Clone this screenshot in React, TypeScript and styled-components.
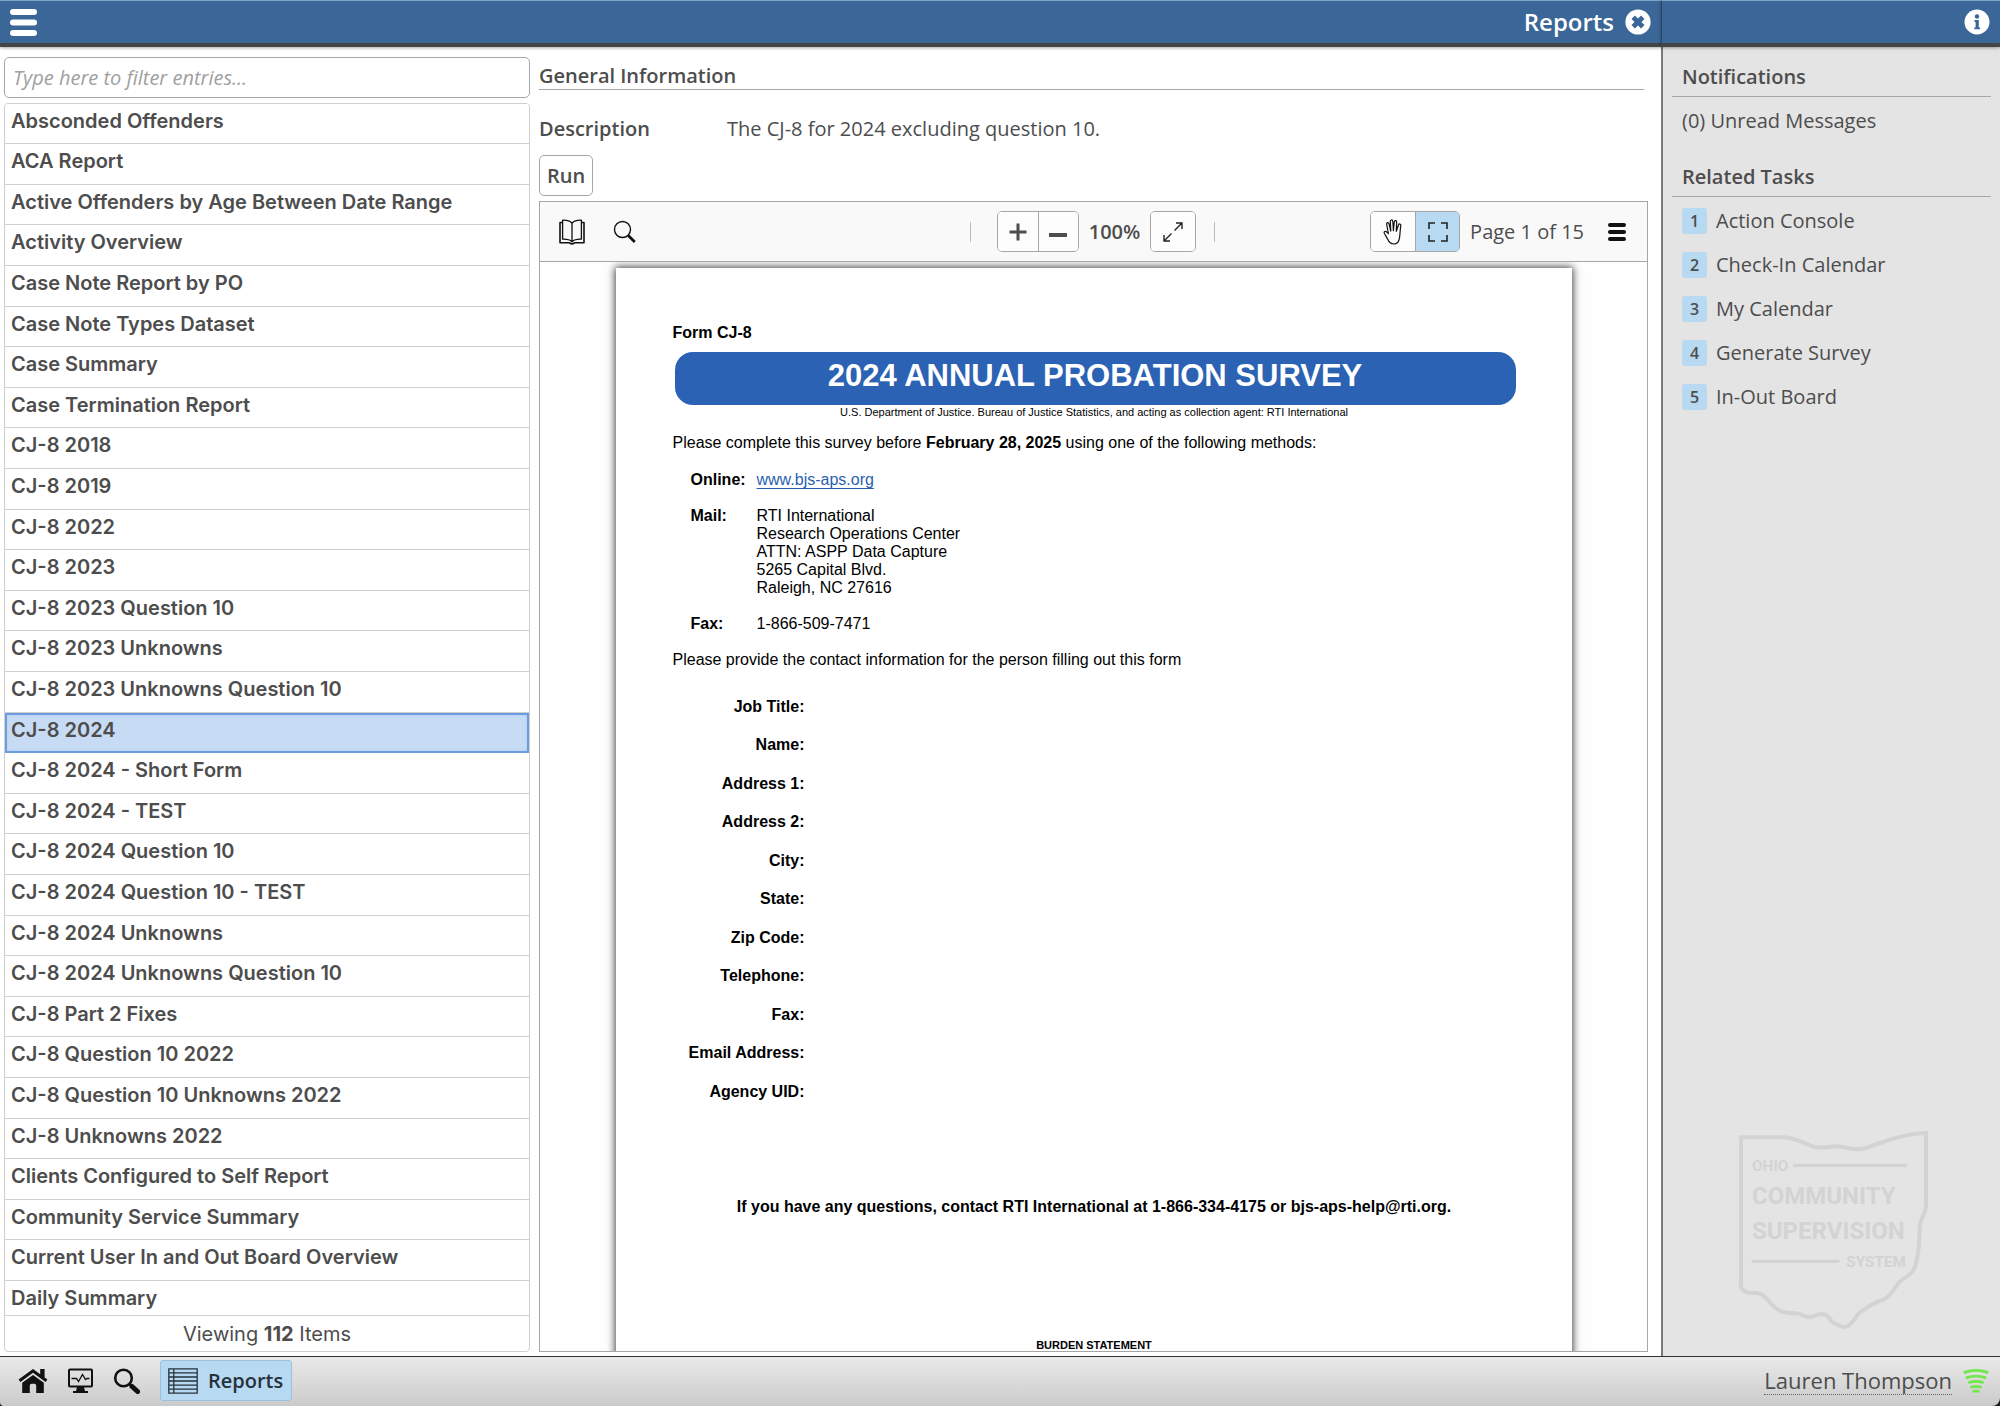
import React, { useState } from "react";
import styled, { createGlobalStyle, css } from "styled-components";

const openSans = '"Open Sans", "Noto Sans", sans-serif';
const inter = 'Inter, "Liberation Sans", sans-serif';
const arial = '"Liberation Sans", Arial, sans-serif';

const ink = "#4d4d4d";
const line = "#a6a6a6";
const softLine = "#cfcfcf";
const highlight = "#b7d9f1";

const GlobalStyle = createGlobalStyle`
  *, *::before, *::after { box-sizing: border-box; }
  body { margin: 0; background: #1c1c1c; color: ${ink}; font: 400 20px/28px ${openSans}; }
  button { font: inherit; color: inherit; cursor: pointer; }
  h1, h2, p, ul, ol, dl, dd { margin: 0; padding: 0; }
  ul, ol { list-style: none; }
  svg { display: block; }
`;

const Shell = styled.div`
  display: grid;
  grid-template-columns: minmax(0, 1fr) 339px;
  grid-template-rows: 47px minmax(0, 1fr) 50px;
  height: 100vh;
  overflow: hidden;
`;

const TopBar = styled.header<{ $divided?: boolean }>`
  display: flex;
  align-items: center;
  justify-content: space-between;
  padding: 0 10px;
  background: #3b6798;
  color: #fff;
  border-top: 1px solid #7ea3c8;
  border-bottom: 4px solid #434547;
  border-left: ${(p) => (p.$divided ? "1px solid #2c4763" : "0")};
  box-shadow: 0 1px 3px rgba(0, 0, 0, 0.35);
  z-index: 1;
`;

const TopTitle = styled.h1`
  display: flex;
  align-items: center;
  gap: 11px;
  margin-left: auto;
  font: 600 24px/32px ${openSans};
`;

const IconButton = styled.button`
  display: flex;
  padding: 0;
  border: 0;
  background: none;
`;

const Workspace = styled.main`
  display: grid;
  grid-template-columns: 526px minmax(0, 1fr);
  column-gap: 9px;
  padding: 10px 13px 4px 4px;
  background: #fff;
`;

const ReportPane = styled.section`
  display: flex;
  flex-direction: column;
  gap: 5px;
  min-height: 0;
`;

const FilterInput = styled.input`
  height: 41px;
  padding: 0 8px;
  border: 1px solid ${line};
  border-radius: 5px;
  background: #fff;
  color: ${ink};
  font: 400 20px/28px ${openSans};
  &::placeholder { color: #a0a0a0; font-style: italic; opacity: 1; }
`;

const ReportBox = styled.div`
  display: flex;
  flex-direction: column;
  flex: 1;
  min-height: 0;
  border: 1px solid ${softLine};
  border-radius: 4px;
  overflow: hidden;
  font-optical-sizing: none;
`;

const ReportList = styled.ul`
  flex: 1;
  min-height: 0;
  overflow: hidden;
`;

const ReportItem = styled.li`
  height: 41px;
  &:nth-child(5n + 1), &:nth-child(5n + 3) { height: 40px; }
`;

const ReportButton = styled.button<{ $selected: boolean }>`
  display: block;
  width: 100%;
  height: 100%;
  padding: 0 6px 6px;
  border: 0;
  border-bottom: 1px solid ${softLine};
  background: #fff;
  text-align: left;
  font: 600 20px/24px ${inter};
  font-optical-sizing: none;
  ${(p) =>
    p.$selected &&
    css`
      background: #c8dbf4;
      border-bottom: 0;
      box-shadow: inset 0 0 0 2px #6b9ddf, inset 0 0 3px 2px #a9cbf3;
    `}
`;

const ListCount = styled.p`
  height: 36px;
  border-top: 1px solid ${softLine};
  text-align: center;
  font: 400 20px/36px ${inter};
`;

const DetailPane = styled.section`
  display: flex;
  flex-direction: column;
  min-height: 0;
`;

const DetailHeading = styled.h2`
  height: 33px;
  margin-right: 4px;
  padding-top: 5px;
  border-bottom: 1px solid ${line};
  font: 600 20px/28px ${openSans};
`;

const DescriptionRow = styled.dl`
  display: grid;
  grid-template-columns: 188px minmax(0, 1fr);
  padding: 25px 0 12px;
  dt { font-weight: 600; }
`;

const RunButton = styled.button`
  align-self: flex-start;
  height: 41px;
  margin-bottom: 5px;
  padding: 0 7px;
  border: 1px solid ${line};
  border-radius: 5px;
  background: #fff;
  font-weight: 600;
`;

const Viewer = styled.div`
  display: flex;
  flex-direction: column;
  flex: 1;
  min-height: 0;
  border: 1px solid ${line};
`;

const ViewerToolbar = styled.div`
  display: grid;
  grid-template-columns: 1fr auto 1fr;
  align-items: center;
  flex: none;
  height: 60px;
  padding: 0 21px 0 19px;
  background: #f9f9f9;
  border-bottom: 1px solid ${line};
`;

const ToolGroup = styled.div<{ $gap: number; $end?: boolean }>`
  display: flex;
  align-items: center;
  gap: ${(p) => p.$gap}px;
  justify-content: ${(p) => (p.$end ? "flex-end" : "flex-start")};
`;

const ToolDivider = styled.span`
  width: 1px;
  height: 20px;
  background: #bdbdbd;
`;

const ToolButtons = styled.div`
  display: flex;
  border: 1px solid ${line};
  border-radius: 5px;
  overflow: hidden;
`;

const ToolButton = styled.button<{ $wide?: boolean; $active?: boolean }>`
  display: flex;
  align-items: center;
  justify-content: center;
  width: ${(p) => (p.$wide ? 44 : 40)}px;
  height: 39px;
  padding: 0;
  border: 0;
  background: ${(p) => (p.$active ? highlight : "#fdfdfd")};
  & + & { border-left: 1px solid ${line}; }
`;

const ZoomControls = styled.div`
  display: flex;
  align-items: center;
  gap: 10px;
  margin: 0 8px 0 16px;
`;

const ZoomLevel = styled.span`
  font-weight: 600;
`;

const MenuButton = styled(IconButton)`
  margin-left: 14px;
  color: #111;
`;

const PageArea = styled.div`
  display: flex;
  justify-content: center;
  flex: 1;
  min-height: 0;
  padding-top: 6px;
  background: #fefefe;
  overflow: hidden;
`;

const Sheet = styled.article`
  flex: 0 0 956px;
  height: 1237px;
  padding: 56px 56px 0 57px;
  background: #fff;
  color: #000;
  box-shadow: 0 0 8px 1px rgba(0, 0, 0, 0.75);
  font: 400 16px/18px ${arial};
`;

const Banner = styled.h2`
  height: 53px;
  margin: 10px 0 0 2px;
  border-radius: 18px;
  background: #2b62b3;
  color: #fff;
  text-align: center;
  font: 700 31px/48px ${arial};
`;

const SmallPrint = styled.p<{ $bold?: boolean; $top?: number }>`
  margin-top: ${(p) => p.$top ?? 0}px;
  text-align: center;
  font: ${(p) => (p.$bold ? 700 : 400)} 11px/14px ${arial};
`;

const Paragraph = styled.p<{ $top: number; $center?: boolean }>`
  margin-top: ${(p) => p.$top}px;
  text-align: ${(p) => (p.$center ? "center" : "left")};
`;

const Contacts = styled.dl`
  display: grid;
  grid-template-columns: 66px minmax(0, 1fr);
  row-gap: 18px;
  padding: 19px 0 0 18px;
  dt { font-weight: 700; }
  a { color: #2b5fb0; text-underline-offset: 3px; text-decoration-thickness: 1px; }
`;

const FieldList = styled.ul`
  width: 132px;
  margin-top: 19px;
`;

const Field = styled.li`
  height: 38px;
  text-align: right;
  white-space: nowrap;
  font: 700 16px/38px ${arial};
  &:nth-child(even) { height: 39px; }
`;

const SidePanel = styled.aside`
  display: flex;
  flex-direction: column;
  padding: 14px 9px 27px 9px;
  background: #e4e4e4;
  border-left: 2px solid #7a7a7a;
`;

const SideHeading = styled.h2`
  height: 36px;
  padding: 2px 10px 0;
  border-bottom: 1px solid ${line};
  font: 600 20px/28px ${openSans};
`;

const SideMessages = styled.a`
  padding: 10px 10px 26px;
  color: inherit;
  text-decoration: none;
`;

const TaskList = styled.ol`
  padding: 2px 10px;
`;

const TaskLink = styled.a`
  display: flex;
  align-items: center;
  gap: 9px;
  height: 44px;
  color: inherit;
  text-decoration: none;
`;

const TaskNumber = styled.span`
  width: 25px;
  height: 26px;
  border-radius: 3px;
  background: ${highlight};
  text-align: center;
  font: 600 16px/26px ${openSans};
`;

const LogoSlot = styled.div`
  margin: auto 63px 0 auto;
`;

const TaskBar = styled.footer`
  grid-column: 1 / -1;
  display: flex;
  align-items: center;
  gap: 20px;
  padding: 0 11px 2px 18px;
  border-top: 1px solid #333;
  border-radius: 0 0 8px 4px;
  background: linear-gradient(#e9e9e9, #cbcbcb);
`;

const OpenTab = styled.button`
  display: flex;
  align-items: center;
  gap: 10px;
  height: 41px;
  padding: 0 8px 0 7px;
  border: 1px solid #9cc1dd;
  border-radius: 3px;
  background: ${highlight};
  color: #26323b;
  font-weight: 600;
`;

const Account = styled.div`
  display: flex;
  align-items: center;
  gap: 11px;
  margin-left: auto;
`;

const UserLink = styled.a`
  border-bottom: 1px dotted #666;
  color: inherit;
  text-decoration: none;
  font: 400 22px/28px ${openSans};
`;

const BarsIcon = ({ size, thick }: { size: number; thick: number }) => (
  <svg width={size} height={size} viewBox={`0 0 ${size} ${size}`} fill="currentColor" aria-hidden="true">
    {[0, (size - thick) / 2, size - thick].map((y) => (
      <rect key={y} y={y} width={size} height={thick} rx={thick / 2} />
    ))}
  </svg>
);

const CloseIcon = () => (
  <svg width="26" height="26" viewBox="0 0 26 26" aria-hidden="true">
    <circle cx="13" cy="13" r="12.6" fill="#fff" />
    <path d="M8.200 8.200l9.600 9.600M17.800 8.200l-9.600 9.600" stroke="#3b6798" strokeWidth="4.800" />
  </svg>
);

const InfoIcon = () => (
  <svg width="26" height="26" viewBox="0 0 26 26" aria-hidden="true">
    <circle cx="13" cy="13" r="12.5" fill="#fff" />
    <circle cx="13" cy="7.5" r="2.2" fill="#3b6798" />
    <path d="M10.5 11h4.300v7.500h1.200v1.800h-5.700v-1.800h1.300v-5.600h-1.100z" fill="#3b6798" />
  </svg>
);

const BookIcon = () => (
  <svg width="26" height="26" viewBox="0 0 26 26" fill="none" stroke="#111" strokeWidth="1.3" strokeLinejoin="round" aria-hidden="true">
    <path d="M13 4.2C11 2 7.5 1 3.6 1.2v19c4-.2 7.4.6 9.4 2.6 2-2 5.4-2.8 9.4-2.6v-19C18.5 1 15 2 13 4.2zM13 4.2v18.6" />
    <path d="M3.6 3.500H1v20.200h9.400c.8 1.600 4.400 1.600 5.200 0H25V3.500h-2.600" strokeWidth="1.6" />
  </svg>
);

const FindIcon = () => (
  <svg width="24" height="24" viewBox="0 0 24 24" fill="none" stroke="#111" aria-hidden="true">
    <circle cx="9.5" cy="9.5" r="8" strokeWidth="1.4" />
    <path d="M15.200 15.400l6.600 6.600" strokeWidth="2.8" />
  </svg>
);

const PlusIcon = () => (
  <svg width="18" height="18" viewBox="0 0 18 18" stroke={ink} strokeWidth="3" aria-hidden="true">
    <path d="M9 .5v17M.5 9h17" />
  </svg>
);

const MinusIcon = () => (
  <svg width="18" height="18" viewBox="0 0 18 18" stroke={ink} strokeWidth="4" aria-hidden="true">
    <path d="M0 12h18" />
  </svg>
);

const ExpandIcon = () => (
  <svg width="20" height="20" viewBox="0 0 20 20" fill="none" stroke="#222" strokeWidth="1.4" aria-hidden="true">
    <path d="M13 1h6v6M19 1l-7.500 7.500M7 19H1v-6M1 19l7.500-7.500" />
  </svg>
);

const HandIcon = () => (
  <svg width="20" height="26" viewBox="0 0 20 26" fill="none" stroke="#111" strokeWidth="1.2" strokeLinecap="round" strokeLinejoin="round" aria-hidden="true">
    <path d="M5.400 14.500L3.700 5.400c-.4-2 1.800-2.400 2.300-.5l1.800 7.200L7.300 2.600c-.1-2.100 2.300-2.200 2.500-.1l.6 9.200.9-8.700c.2-2 2.500-1.800 2.400.2l-.4 9.100 2.200-6.300c.6-1.700 2.600-1.100 2.300.7-.7 3.800-.7 8-1.200 11.600-.6 4.200-2.600 6.700-5.800 6.700-3.300 0-5-2-6.200-4.900L1.300 14.200c-.7-1.700 1.400-2.600 2.500-1.100z" />
  </svg>
);

const FrameIcon = () => (
  <svg width="20" height="20" viewBox="0 0 20 20" fill="none" stroke="#222" strokeWidth="1.6" aria-hidden="true">
    <path d="M1 7V1h6M13 1h6v6M19 13v6h-6M7 19H1v-6" />
  </svg>
);

const HomeIcon = () => (
  <svg width="30" height="26" viewBox="0 0 30 26" fill="#111" aria-hidden="true">
    <path d="M15 1L.6 11.600l1.800 2.300L15 4.800l12.600 9.100 1.800-2.300-2.800-2.100V1h-4.400v5.300z" />
    <path d="M15 7L4.200 14.800V25h7.600v-7.200c0-1.200.8-2 2-2h2.400c1.200 0 2 .8 2 2V25h7.600V14.800z" />
  </svg>
);

const MonitorIcon = () => (
  <svg width="25" height="26" viewBox="0 0 25 26" fill="none" stroke="#111" aria-hidden="true">
    <rect x="1" y="1.500" width="23" height="17" rx="1" strokeWidth="2" />
    <path d="M3.500 10.500h5l2 3 4-7 3 5 1.500-1h2.500" strokeWidth="1.3" />
    <path d="M9 19h7l1 4h3v2H5v-2h3z" fill="#111" stroke="none" />
  </svg>
);

const SearchIcon = () => (
  <svg width="27" height="26" viewBox="0 0 27 26" fill="none" stroke="#111" aria-hidden="true">
    <circle cx="10.500" cy="10" r="8.300" strokeWidth="2.600" />
    <path d="M16.500 16l3 3" strokeWidth="2.600" />
    <path d="M19 18.500l5.600 5" strokeWidth="5" strokeLinecap="round" />
  </svg>
);

const TableIcon = () => (
  <svg width="30" height="26" viewBox="0 0 30 26" fill="none" stroke="#26323b" strokeWidth="1.3" aria-hidden="true">
    <path d="M.8.8h28.400v24.400H.8zM.8 4.900h28.400M.8 9h28.400M.8 13h28.400M.8 17.100h28.400M.8 21.200h28.400M5.800.8v24.400" />
  </svg>
);

const SignalIcon = () => (
  <svg width="26" height="24" viewBox="0 0 26 24" fill="none" stroke="#6fe84a" strokeWidth="2.8" strokeLinecap="round" aria-hidden="true">
    <path d="M1.800 3.400q11.200-4 22.400 0M4 8.600q9-3 18 0M6.500 13.400q6.500-2 13 0M8.500 18q4.500-1.400 9 0M10.800 22.300q2.200-.7 4.400 0" />
  </svg>
);

const OhioLogo = () => (
  <svg width="189" height="198" viewBox="118 93 567 594" role="img" aria-label="Ohio Community Supervision System">
    <path
      fill="none"
      stroke="#d3d3d3"
      strokeWidth="12"
      d="M124 112H245C290 112 310 130 345 141C370 146 390 139 415 139C440 142 455 148 480 148C505 146 520 133 545 128C590 110 625 102 679 99V320C676 345 664 350 661 375C658 410 660 440 652 475C645 530 615 530 600 545C580 570 570 590 555 597C520 608 490 630 475 642C458 665 450 682 432 681C405 675 395 665 385 650C370 635 350 645 332 652C310 650 305 640 290 640C250 638 240 635 225 622C205 605 195 580 170 579C145 578 135 580 124 562Z"
    />
    <path d="M281 196H621M156 484H419" stroke="#d3d3d3" strokeWidth="10" />
    <g fill="#d3d3d3" fontFamily='Roboto, "Liberation Sans", sans-serif' fontWeight="700">
      <text x="157" y="213" fontSize="46">OHIO</text>
      <text x="157" y="312" fontSize="72">COMMUNITY</text>
      <text x="157" y="418" fontSize="72">SUPERVISION</text>
      <text x="619" y="501" fontSize="46" textAnchor="end">SYSTEM</text>
    </g>
  </svg>
);

const reports = [
  "Absconded Offenders",
  "ACA Report",
  "Active Offenders by Age Between Date Range",
  "Activity Overview",
  "Case Note Report by PO",
  "Case Note Types Dataset",
  "Case Summary",
  "Case Termination Report",
  "CJ-8 2018",
  "CJ-8 2019",
  "CJ-8 2022",
  "CJ-8 2023",
  "CJ-8 2023 Question 10",
  "CJ-8 2023 Unknowns",
  "CJ-8 2023 Unknowns Question 10",
  "CJ-8 2024",
  "CJ-8 2024 - Short Form",
  "CJ-8 2024 - TEST",
  "CJ-8 2024 Question 10",
  "CJ-8 2024 Question 10 - TEST",
  "CJ-8 2024 Unknowns",
  "CJ-8 2024 Unknowns Question 10",
  "CJ-8 Part 2 Fixes",
  "CJ-8 Question 10 2022",
  "CJ-8 Question 10 Unknowns 2022",
  "CJ-8 Unknowns 2022",
  "Clients Configured to Self Report",
  "Community Service Summary",
  "Current User In and Out Board Overview",
  "Daily Summary",
];

const fields = [
  "Job Title:",
  "Name:",
  "Address 1:",
  "Address 2:",
  "City:",
  "State:",
  "Zip Code:",
  "Telephone:",
  "Fax:",
  "Email Address:",
  "Agency UID:",
];

const tasks = ["Action Console", "Check-In Calendar", "My Calendar", "Generate Survey", "In-Out Board"];

const mailingAddress = [
  "RTI International",
  "Research Operations Center",
  "ATTN: ASPP Data Capture",
  "5265 Capital Blvd.",
  "Raleigh, NC 27616",
];

function SurveyPage() {
  return (
    <Sheet>
      <strong>Form CJ-8</strong>
      <Banner>2024 ANNUAL PROBATION SURVEY</Banner>
      <SmallPrint>
        U.S. Department of Justice. Bureau of Justice Statistics, and acting as collection agent: RTI International
      </SmallPrint>
      <Paragraph $top={15}>
        Please complete this survey before <strong>February 28, 2025</strong> using one of the following methods:
      </Paragraph>
      <Contacts>
        <dt>Online:</dt>
        <dd><a href="#survey">www.bjs-aps.org</a></dd>
        <dt>Mail:</dt>
        <dd>
          {mailingAddress.map((text) => (
            <div key={text}>{text}</div>
          ))}
        </dd>
        <dt>Fax:</dt>
        <dd>1-866-509-7471</dd>
      </Contacts>
      <Paragraph $top={18}>Please provide the contact information for the person filling out this form</Paragraph>
      <FieldList>
        {fields.map((name) => (
          <Field key={name}>{name}</Field>
        ))}
      </FieldList>
      <Paragraph $top={87} $center>
        <strong>If you have any questions, contact RTI International at 1-866-334-4175 or bjs-aps-help@rti.org.</strong>
      </Paragraph>
      <SmallPrint $bold $top={122}>BURDEN STATEMENT</SmallPrint>
    </Sheet>
  );
}

export default function App() {
  const [selected, setSelected] = useState("CJ-8 2024");
  const [filter, setFilter] = useState("");
  const shown = reports.filter((name) => name.toLowerCase().includes(filter.toLowerCase()));

  return (
    <>
      <GlobalStyle />
      <Shell>
        <TopBar>
          <IconButton aria-label="Menu"><BarsIcon size={27} thick={6} /></IconButton>
          <TopTitle>
            Reports
            <IconButton aria-label="Close reports"><CloseIcon /></IconButton>
          </TopTitle>
        </TopBar>
        <TopBar $divided>
          <span />
          <IconButton aria-label="Information"><InfoIcon /></IconButton>
        </TopBar>

        <Workspace>
          <ReportPane>
            <FilterInput
              aria-label="Filter entries"
              placeholder="Type here to filter entries..."
              value={filter}
              onChange={(event) => setFilter(event.target.value)}
            />
            <ReportBox>
              <ReportList>
                {shown.map((name) => (
                  <ReportItem key={name}>
                    <ReportButton $selected={name === selected} onClick={() => setSelected(name)}>
                      {name}
                    </ReportButton>
                  </ReportItem>
                ))}
              </ReportList>
              <ListCount>Viewing <strong>112</strong> Items</ListCount>
            </ReportBox>
          </ReportPane>

          <DetailPane>
            <DetailHeading>General Information</DetailHeading>
            <DescriptionRow>
              <dt>Description</dt>
              <dd>The CJ-8 for 2024 excluding question 10.</dd>
            </DescriptionRow>
            <RunButton>Run</RunButton>
            <Viewer>
              <ViewerToolbar>
                <ToolGroup $gap={28}>
                  <IconButton aria-label="Contents"><BookIcon /></IconButton>
                  <IconButton aria-label="Find"><FindIcon /></IconButton>
                </ToolGroup>
                <ToolGroup $gap={10}>
                  <ToolDivider />
                  <ZoomControls>
                    <ToolButtons>
                      <ToolButton aria-label="Zoom in"><PlusIcon /></ToolButton>
                      <ToolButton aria-label="Zoom out"><MinusIcon /></ToolButton>
                    </ToolButtons>
                    <ZoomLevel>100%</ZoomLevel>
                    <ToolButtons>
                      <ToolButton $wide aria-label="Fit to window"><ExpandIcon /></ToolButton>
                    </ToolButtons>
                  </ZoomControls>
                  <ToolDivider />
                </ToolGroup>
                <ToolGroup $gap={10} $end>
                  <ToolButtons>
                    <ToolButton $wide aria-label="Pan"><HandIcon /></ToolButton>
                    <ToolButton $wide $active aria-label="Select"><FrameIcon /></ToolButton>
                  </ToolButtons>
                  <span>Page 1 of 15</span>
                  <MenuButton aria-label="Viewer menu"><BarsIcon size={18} thick={4} /></MenuButton>
                </ToolGroup>
              </ViewerToolbar>
              <PageArea>
                <SurveyPage />
              </PageArea>
            </Viewer>
          </DetailPane>
        </Workspace>

        <SidePanel>
          <SideHeading>Notifications</SideHeading>
          <SideMessages href="#messages">(0) Unread Messages</SideMessages>
          <SideHeading>Related Tasks</SideHeading>
          <TaskList>
            {tasks.map((name, index) => (
              <li key={name}>
                <TaskLink href="#task">
                  <TaskNumber>{index + 1}</TaskNumber>
                  {name}
                </TaskLink>
              </li>
            ))}
          </TaskList>
          <LogoSlot><OhioLogo /></LogoSlot>
        </SidePanel>

        <TaskBar>
          <IconButton aria-label="Home"><HomeIcon /></IconButton>
          <IconButton aria-label="Dashboard"><MonitorIcon /></IconButton>
          <IconButton aria-label="Search"><SearchIcon /></IconButton>
          <OpenTab><TableIcon />Reports</OpenTab>
          <Account>
            <UserLink href="#account">Lauren Thompson</UserLink>
            <SignalIcon />
          </Account>
        </TaskBar>
      </Shell>
    </>
  );
}
